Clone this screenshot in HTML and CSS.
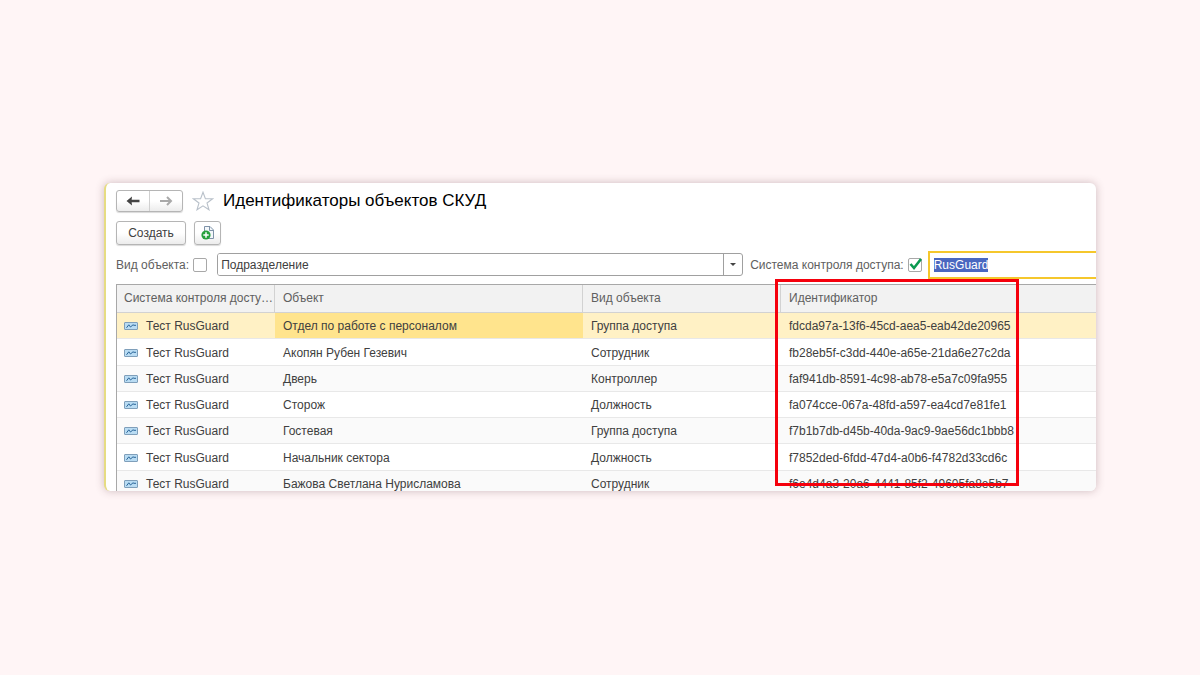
FILE: index.html
```html
<!DOCTYPE html>
<html lang="ru">
<head>
<meta charset="utf-8">
<title>Идентификаторы объектов СКУД</title>
<link rel="stylesheet" href="styles.css">
</head>
<body>
<svg class="sprite" aria-hidden="true">
  <symbol id="record" viewBox="0 0 14 8">
    <rect x="0.5" y="0.5" width="13" height="7" rx="0.5" fill="#b9dcf3" stroke="#7f9fba"/>
    <path d="M2.500 5.800 4.800 2.800 6.500 5 9 2.800l1 .5H12" fill="none" stroke="#2a6699" stroke-width="1"/>
  </symbol>
</svg>
<main class="window">
  <header class="titlebar">
    <div class="nav">
      <button class="nav-btn" type="button" aria-label="Назад"><svg width="14" height="10" viewBox="0 0 14 10"><path d="M13.500 5H3" fill="none" stroke="#444" stroke-width="2.400"/><path d="M.5 5 6 .5 5.500 5 6 9.500z" fill="#444"/></svg></button>
      <button class="nav-btn" type="button" aria-label="Вперед"><svg width="14" height="10" viewBox="0 0 14 10"><path d="M1 5h10M8 1l4 4-4 4" fill="none" stroke="#a9a9a9" stroke-width="2"/></svg></button>
    </div>
    <button class="star" type="button" aria-label="В избранное"><svg width="22" height="20" viewBox="0 0 22 20"><path d="M11 1.200 13.400 7.600 20.600 7.800 15 12l2 6.800-6-4-6 4 2-6.800L1.400 7.800l7.200-.2z" fill="#fff" stroke="#b9c1ca" stroke-width="1.100"/></svg></button>
    <h1 class="title">Идентификаторы объектов СКУД</h1>
  </header>
  <div class="toolbar">
    <button class="btn create" type="button">Создать</button>
    <button class="btn add" type="button" aria-label="Создать группу"><svg width="14" height="15" viewBox="0 0 14 15"><path d="M3.500 7V1.500H9L12.500 5v8.500H8" fill="#f4f8fb" stroke="#7f93a8"/><path d="M8.500 1.500V5.500h4" fill="none" stroke="#7f93a8"/><circle cx="5" cy="10" r="4.600" fill="#27a03c"/><path d="M5 7.300v5.400M2.300 10h5.400" stroke="#fff" stroke-width="1.500"/></svg></button>
  </div>
  <div class="filters">
    <label class="label" for="kind-on">Вид объекта:</label>
    <input class="check" id="kind-on" type="checkbox">
    <div class="combo">
      <select class="select" aria-label="Вид объекта"><option>Подразделение</option></select>
      <span class="drop"></span>
    </div>
    <label class="label" for="system-on">Система контроля доступа:</label>
    <span class="tick">
      <input class="check" id="system-on" type="checkbox" checked>
      <svg class="tick-mark" width="14" height="14" viewBox="0 0 14 14"><path d="M2.500 6 6 10 13 1" fill="none" stroke="#0a9a50" stroke-width="2.600"/></svg>
    </span>
    <div class="field"><input class="field-input" type="text" value="RusGuard" aria-label="Система контроля доступа"></div>
  </div>
  <section class="list">
    <div class="viewport">
      <table class="grid">
        <colgroup><col class="c-system"><col class="c-object"><col class="c-kind"><col class="c-id"><col></colgroup>
        <thead><tr><th>Система контроля досту…</th><th>Объект</th><th>Вид объекта</th><th>Идентификатор</th><th></th></tr></thead>
        <tbody>
          <tr class="current"><td><svg class="rec"><use href="#record"/></svg>Тест RusGuard</td><td class="cell">Отдел по работе с персоналом</td><td>Группа доступа</td><td>fdcda97a-13f6-45cd-aea5-eab42de20965</td><td></td></tr>
          <tr><td><svg class="rec"><use href="#record"/></svg>Тест RusGuard</td><td>Акопян Рубен Гезевич</td><td>Сотрудник</td><td>fb28eb5f-c3dd-440e-a65e-21da6e27c2da</td><td></td></tr>
          <tr><td><svg class="rec"><use href="#record"/></svg>Тест RusGuard</td><td>Дверь</td><td>Контроллер</td><td>faf941db-8591-4c98-ab78-e5a7c09fa955</td><td></td></tr>
          <tr><td><svg class="rec"><use href="#record"/></svg>Тест RusGuard</td><td>Сторож</td><td>Должность</td><td>fa074cce-067a-48fd-a597-ea4cd7e81fe1</td><td></td></tr>
          <tr><td><svg class="rec"><use href="#record"/></svg>Тест RusGuard</td><td>Гостевая</td><td>Группа доступа</td><td>f7b1b7db-d45b-40da-9ac9-9ae56dc1bbb8</td><td></td></tr>
          <tr><td><svg class="rec"><use href="#record"/></svg>Тест RusGuard</td><td>Начальник сектора</td><td>Должность</td><td>f7852ded-6fdd-47d4-a0b6-f4782d33cd6c</td><td></td></tr>
          <tr><td><svg class="rec"><use href="#record"/></svg>Тест RusGuard</td><td>Бажова Светлана Нурисламова</td><td>Сотрудник</td><td>f6e4d4a3-20a6-4441-85f2-49605fa8e5b7</td><td></td></tr>
        </tbody>
      </table>
    </div>
    <div class="highlight"></div>
  </section>
</main>
<script src="script.js"></script>
</body>
</html>
```
FILE: styles.css
```css
* { box-sizing: border-box; }
body {
  margin: 0;
  min-height: 100vh;
  display: flex;
  align-items: center;
  padding: 0 104px 2px;
  background: #fff5f6;
  font: 12px/16px "Liberation Sans", Arial, sans-serif;
  color: #404040;
}
button, input, select { font: inherit; color: inherit; margin: 0; }
.sprite { position: absolute; width: 0; height: 0; }
.window {
  flex: 1;
  min-width: 0;
  padding: 7px 0 0 10px;
  background: #fff;
  border-left: 2px solid #e6dc82;
  border-radius: 6px;
  overflow: hidden;
  box-shadow: 0 0 8px rgba(90, 50, 60, 0.3);
}
.titlebar { display: flex; align-items: center; height: 22px; }
.nav {
  display: flex;
  width: 67px;
  height: 22px;
  border: 1px solid #b5b5b5;
  border-radius: 3px;
  background: linear-gradient(#fff 50%, #ececec);
  box-shadow: 0 1px 1px rgba(0, 0, 0, 0.15);
}
.nav-btn {
  flex: 1;
  display: flex;
  align-items: center;
  justify-content: center;
  padding: 0;
  border: 0;
  background: none;
}
.nav-btn + .nav-btn { border-left: 1px solid #d0d0d0; }
.star { display: flex; margin: 0 9px; padding: 0; border: 0; background: none; }
.title { margin: 0; font-size: 17px; line-height: 22px; font-weight: 400; color: #000; }
.toolbar { display: flex; gap: 8px; margin-top: 9px; }
.btn {
  display: flex;
  align-items: center;
  justify-content: center;
  height: 24px;
  padding: 0;
  border: 1px solid #b5b5b5;
  border-radius: 3px;
  background: linear-gradient(#fff 50%, #ececec);
  box-shadow: 0 1px 1px rgba(0, 0, 0, 0.15);
}
.create { width: 70px; }
.add { width: 27px; }
.filters { display: flex; align-items: center; height: 28px; margin-top: 6px; }
.label { color: #606060; white-space: nowrap; }
.check {
  appearance: none;
  display: block;
  width: 14px;
  height: 14px;
  margin-left: 4px;
  border: 1px solid #a8a8a8;
  border-radius: 2px;
  background: #fff;
}
.combo {
  display: flex;
  flex: 0 1 526px;
  height: 23px;
  margin: 0 7px 0 10px;
  border: 1px solid #a0a0a0;
  border-radius: 3px;
  overflow: hidden;
}
.select { appearance: none; flex: 1; min-width: 0; padding: 0 3px; border: 0; background: #fff; }
.drop { display: flex; align-items: center; justify-content: center; width: 19px; border-left: 1px solid #a0a0a0; }
.drop::before { content: ""; border: 3px solid transparent; border-top-color: #444; border-bottom: 0; }
.tick { position: relative; }
.tick-mark { position: absolute; right: 0; top: 0; pointer-events: none; }
.field { flex: 1; min-width: 0; height: 28px; margin-left: 6px; border: 2px solid #f5c72c; border-right: 0; }
.field-input { width: 100%; height: 24px; padding: 0 4px; border: 0; outline: 0; background: #fff; }
.field-input::selection { background: #4a67c0; color: #fff; }
.list { position: relative; margin-top: 5px; }
.viewport { height: 207px; overflow: hidden; border: 1px solid #a8a8a8; border-width: 1px 0 0 1px; }
.grid { width: 100%; table-layout: fixed; border-collapse: separate; border-spacing: 0; }
.c-system { width: 158px; }
.c-object { width: 308px; }
.c-kind { width: 198px; }
.c-id { width: 239px; }
th, td { padding: 0 0 0 8px; text-align: left; white-space: nowrap; overflow: hidden; }
th:first-child, td:first-child { padding-left: 7px; }
th { height: 28px; font-weight: 400; color: #606060; background: #f2f2f2; border-right: 1px solid #d2d2d2; border-bottom: 1px solid #d2d2d2; }
th:nth-last-child(-n+2) { border-right: 0; }
td { height: 26px; padding-top: 2px; border-bottom: 1px solid #e8e8e8; }
tbody tr:nth-child(4n+2) td { height: 27px; }
tbody tr:nth-child(odd) td { background: #fafafa; }
tbody tr.current td { background: #fff1c5; }
tbody tr.current .cell { background: #ffe48d; }
.rec { display: inline-block; width: 14px; height: 8px; margin-right: 8px; vertical-align: 0; }
.highlight { position: absolute; left: 659px; top: -5px; width: 244px; height: 207px; border: 3px solid #f5000c; pointer-events: none; }
```
FILE: script.js
```js
const input = document.querySelector(".field-input");
input.focus();
input.select();
```
